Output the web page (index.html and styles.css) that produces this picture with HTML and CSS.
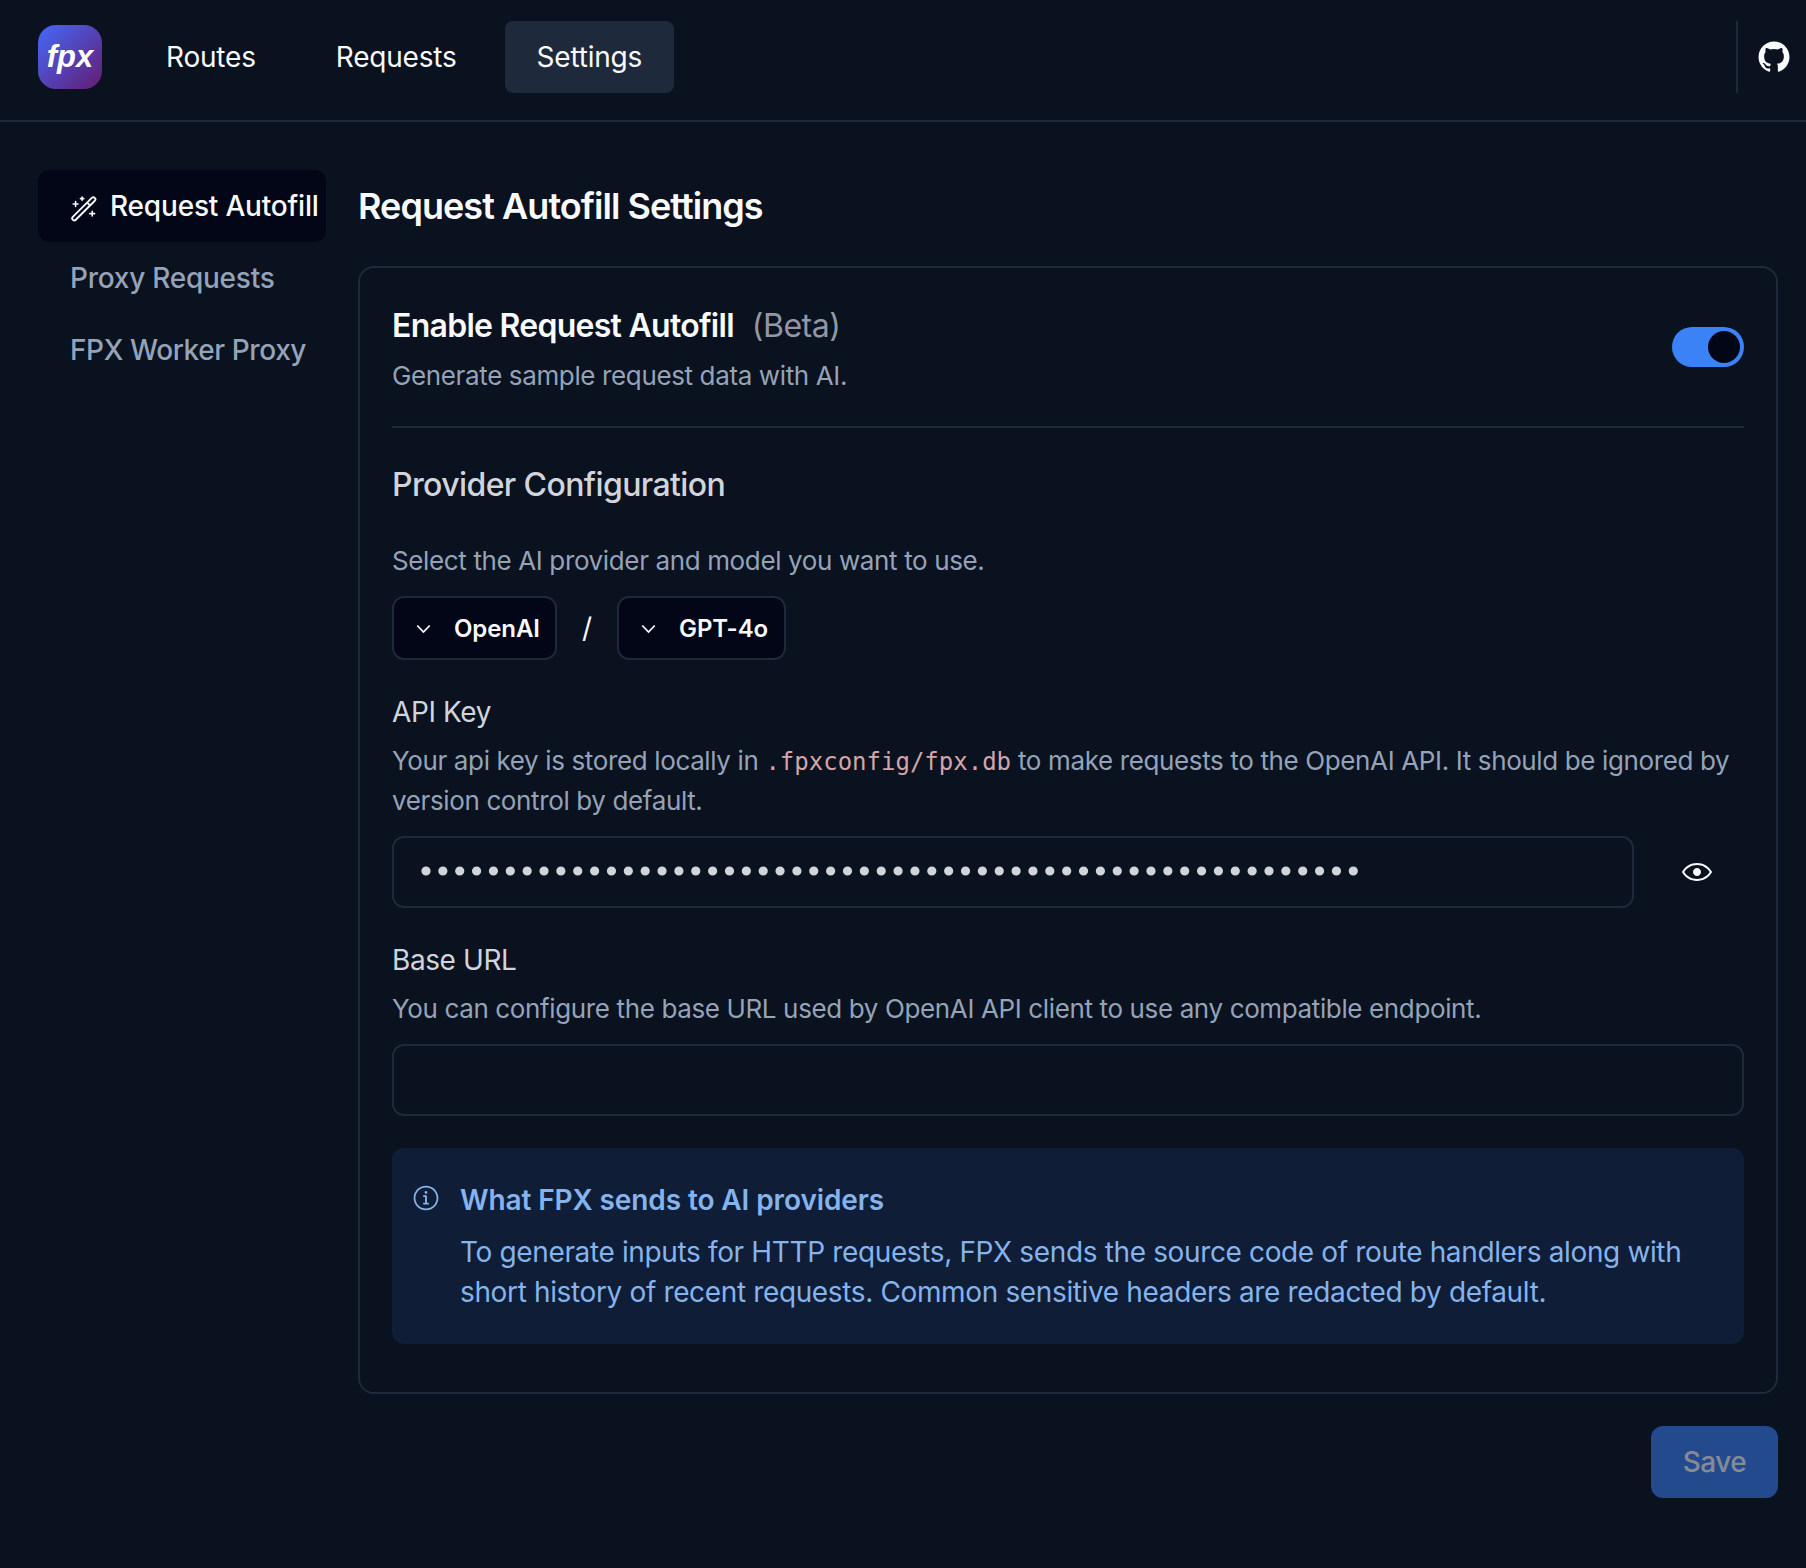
FILE: index.html
```html
<!DOCTYPE html>
<html lang="en">
<head>
<meta charset="utf-8">
<title>FPX Settings</title>
<link rel="stylesheet" href="styles.css">
</head>
<body>
<header class="header">
  <div class="logo"><span class="logo-text">fpx</span></div>
  <nav class="nav">
    <a class="nav-link">Routes</a>
    <a class="nav-link">Requests</a>
    <a class="nav-link nav-link-active">Settings</a>
  </nav>
  <div class="header-end">
    <svg class="github" viewBox="0 0 15 15" fill="currentColor"><path fill-rule="evenodd" clip-rule="evenodd" d="M7.49933 0.25C3.49635 0.25 0.25 3.49593 0.25 7.50024C0.25 10.703 2.32715 13.4206 5.2081 14.3797C5.57084 14.446 5.70302 14.2222 5.70302 14.0299C5.70302 13.8576 5.69679 13.4019 5.69323 12.797C3.67661 13.235 3.25112 11.825 3.25112 11.825C2.92132 10.9874 2.44599 10.7644 2.44599 10.7644C1.78773 10.3149 2.49584 10.3238 2.49584 10.3238C3.22353 10.375 3.60629 11.0711 3.60629 11.0711C4.25298 12.1788 5.30335 11.8588 5.71638 11.6732C5.78225 11.205 5.96962 10.8854 6.17658 10.7043C4.56675 10.5209 2.87415 9.89918 2.87415 7.12104C2.87415 6.32925 3.15677 5.68257 3.62053 5.17563C3.54576 4.99226 3.29697 4.25521 3.69174 3.25691C3.69174 3.25691 4.30015 3.06196 5.68522 3.99973C6.26337 3.83906 6.8838 3.75895 7.50022 3.75583C8.1162 3.75895 8.73619 3.83906 9.31523 3.99973C10.6994 3.06196 11.3069 3.25691 11.3069 3.25691C11.7026 4.25521 11.4538 4.99226 11.3795 5.17563C11.8441 5.68257 12.1245 6.32925 12.1245 7.12104C12.1245 9.9063 10.4292 10.5192 8.81452 10.6985C9.07444 10.9224 9.30633 11.3648 9.30633 12.0413C9.30633 13.0102 9.29742 13.7922 9.29742 14.0299C9.29742 14.2239 9.42828 14.4496 9.79591 14.3788C12.6746 13.4179 14.75 10.7025 14.75 7.50024C14.75 3.49593 11.5036 0.25 7.49933 0.25Z"/></svg>
  </div>
</header>
<div class="page">
  <aside class="sidebar">
    <a class="side-link side-link-active">
      <svg class="wand" viewBox="0 0 15 15" fill="none" stroke="currentColor" stroke-linecap="round" stroke-linejoin="round"><path d="M1.5 12.3 11.7 2.1a1.05 1.05 0 0 1 1.6 1.5L3.1 13.8a1.05 1.05 0 0 1-1.6-1.5ZM9.2 4.6l1.6 1.6"/><path stroke-width=".85" d="M3 4.1v2.6M1.7 5.4h2.6M6.5 1.6v1.8M5.6 2.5h1.8M11.9 9.2v2.6M10.6 10.5h2.6"/></svg>
      <span>Request Autofill</span>
    </a>
    <a class="side-link">Proxy Requests</a>
    <a class="side-link side-link-long">FPX Worker Proxy</a>
  </aside>
  <main class="main">
    <h1 class="title">Request Autofill Settings</h1>
    <section class="card">
      <div class="enable">
        <div class="enable-copy">
          <h2 class="heading heading-bright">Enable Request Autofill<span class="beta">(Beta)</span></h2>
          <p class="hint">Generate sample request data with AI.</p>
        </div>
        <div class="switch"><span class="knob"></span></div>
      </div>
      <h2 class="heading provider">Provider Configuration</h2>
      <p class="hint">Select the AI provider and model you want to use.</p>
      <div class="selects">
        <button class="select select-provider"><svg class="chevron" viewBox="0 0 12 8"><path d="M1 1.2 6 6.4l5-5.2"/></svg>OpenAI</button>
        <span class="slash">/</span>
        <button class="select select-model"><svg class="chevron" viewBox="0 0 12 8"><path d="M1 1.2 6 6.4l5-5.2"/></svg>GPT-4o</button>
      </div>
      <div class="label">API Key</div>
      <p class="hint field-hint">Your api key is stored locally in <code class="code">.fpxconfig/fpx.db</code> to make requests to the OpenAI API. It should be ignored by<br>version control by default.</p>
      <div class="key-row">
        <div class="input key-input"><svg class="dots" viewBox="0 0 940 10"><path d="M5 5H933"/></svg></div>
        <button class="reveal"><svg class="eye" viewBox="0 0 15 15" fill="currentColor"><path fill-rule="evenodd" clip-rule="evenodd" d="M7.5 11C4.80285 11 2.52952 9.62184 1.09622 7.50001C2.52952 5.37816 4.80285 4 7.5 4C10.1971 4 12.4705 5.37816 13.9038 7.50001C12.4705 9.62183 10.1971 11 7.5 11ZM7.5 3C4.30786 3 1.65639 4.70638 0.0760002 7.23501C-0.0253338 7.39715 -0.0253334 7.60288 0.0760014 7.76501C1.65639 10.2936 4.30786 12 7.5 12C10.6921 12 13.3436 10.2936 14.924 7.76501C15.0253 7.60288 15.0253 7.39715 14.924 7.23501C13.3436 4.70638 10.6921 3 7.5 3ZM7.5 9.5C8.60457 9.5 9.5 8.60457 9.5 7.5C9.5 6.39543 8.60457 5.5 7.5 5.5C6.39543 5.5 5.5 6.39543 5.5 7.5C5.5 8.60457 6.39543 9.5 7.5 9.5Z"/></svg></button>
      </div>
      <div class="label">Base URL</div>
      <p class="hint field-hint">You can configure the base URL used by OpenAI API client to use any compatible endpoint.</p>
      <div class="input"></div>
      <div class="notice">
        <svg class="info" viewBox="0 0 15 15" fill="currentColor"><path fill-rule="evenodd" clip-rule="evenodd" d="M7.49991 0.876892C3.84222 0.876892 0.877075 3.84204 0.877075 7.49972C0.877075 11.1574 3.84222 14.1226 7.49991 14.1226C11.1576 14.1226 14.1227 11.1574 14.1227 7.49972C14.1227 3.84204 11.1576 0.876892 7.49991 0.876892ZM1.82707 7.49972C1.82707 4.36671 4.36689 1.82689 7.49991 1.82689C10.6329 1.82689 13.1727 4.36671 13.1727 7.49972C13.1727 10.6327 10.6329 13.1726 7.49991 13.1726C4.36689 13.1726 1.82707 10.6327 1.82707 7.49972ZM8.24992 4.49999C8.24992 4.9142 7.91413 5.24999 7.49992 5.24999C7.08571 5.24999 6.74992 4.9142 6.74992 4.49999C6.74992 4.08577 7.08571 3.74999 7.49992 3.74999C7.91413 3.74999 8.24992 4.08577 8.24992 4.49999ZM6.00003 5.99999H6.50003H7.50003C7.77618 5.99999 8.00003 6.22384 8.00003 6.49999V9.99999H8.50003H9.00003V11H8.50003H7.50003H6.50003H6.00003V9.99999H6.50003H7.00003V6.99999H6.50003H6.00003V5.99999Z"/></svg>
        <div>
          <h3 class="notice-title">What FPX sends to AI providers</h3>
          <p class="notice-text">To generate inputs for HTTP requests, FPX sends the source code of route handlers along with<br>short history of recent requests. Common sensitive headers are redacted by default.</p>
        </div>
      </div>
    </section>
    <button class="save">Save</button>
  </main>
</div>
</body>
</html>
```
FILE: styles.css
```css
* { box-sizing: border-box; margin: 0; }
body { background: #0a111f; color: #f8fafc; font: 400 28px/40px Inter, "Liberation Sans", sans-serif; }
svg { display: block; flex: none; }
button { font: inherit; color: inherit; letter-spacing: inherit; border: 0; background: none; padding: 0; }

.header { display: flex; height: 122px; padding: 21px 0 27px 38px; border-bottom: 2px solid #1e293b; }
.logo { display: flex; align-items: center; justify-content: center; width: 64px; height: 64px; margin-top: 4px; border-radius: 18px; background: linear-gradient(135deg, #4469fa, #641c72); }
.logo-text { font: italic 700 31px/40px "Liberation Sans", sans-serif; color: #fff; }
.nav { display: flex; gap: 16px; margin-left: 32px; height: 72px; letter-spacing: -0.2px; }
.nav-link { padding: 16px 32px; border-radius: 8px; }
.nav-link-active { background: #1e293b; }
.header-end { display: flex; align-items: center; width: 70px; height: 72px; margin-left: auto; padding-left: 20px; border-left: 2px solid #1e293b; }
.github { width: 32px; height: 32px; }

.page { display: flex; gap: 32px; padding: 48px 28px 0 38px; }
.sidebar { width: 288px; flex: none; font-weight: 500; }
.side-link { display: flex; align-items: center; gap: 12px; height: 72px; padding-left: 32px; border-radius: 12px; color: #94a3b8; white-space: nowrap; letter-spacing: -0.25px; }
.side-link-active { background: #020617; color: #f8fafc; letter-spacing: -0.18px; }
.side-link-long { letter-spacing: -0.4px; }
.wand { width: 28px; height: 28px; margin-top: 4px; }
.main { flex: 1; min-width: 0; display: flex; flex-direction: column; }
.title { height: 96px; font-size: 36px; font-weight: 600; line-height: 72px; letter-spacing: -0.95px; }
.card { border: 2px solid #1e293b; border-radius: 16px; padding: 32px 32px 48px; }
.enable { display: flex; align-items: center; justify-content: space-between; height: 128px; padding-bottom: 32px; border-bottom: 2px solid #1e293b; }
.enable-copy { padding-top: 3px; }
.heading { font-size: 32px; font-weight: 550; line-height: 48px; letter-spacing: -0.6px; color: #d1d5db; }
.heading-bright { color: #f8fafc; font-weight: 600; letter-spacing: -0.73px; margin-bottom: 6px; }
.beta { font-weight: 400; letter-spacing: -0.5px; color: #9297a3; margin-left: 18px; }
.hint { font-size: 26px; line-height: 40px; letter-spacing: -0.37px; color: #94a3b8; white-space: nowrap; }
.switch { width: 72px; height: 40px; padding: 4px; border-radius: 20px; background: #3b82f6; display: flex; justify-content: flex-end; }
.knob { width: 32px; height: 32px; border-radius: 50%; background: #020617; }
.provider { margin: 33px 0 32px; }
.selects { display: flex; align-items: center; margin: 15px 0 32px; }
.select { display: flex; align-items: center; gap: 23px; height: 64px; padding: 2px 0 0 22px; border: 2px solid #1e293b; border-radius: 12px; background: #020617; font-size: 24px; font-weight: 600; letter-spacing: -0.1px; }
.select-provider { width: 165px; }
.select-model { width: 169px; }
.chevron { width: 15px; height: 10px; fill: none; stroke: currentColor; stroke-width: 1.4; }
.slash { width: 60px; text-align: center; }
.label { color: #d1d5db; letter-spacing: -0.4px; }
.field-hint { margin: 9px 0 15px; }
.code { font: 24px/1 "DejaVu Sans Mono", monospace; letter-spacing: 0; color: #d4a5a8; }
.key-row { display: flex; gap: 16px; margin-bottom: 32px; }
.input { height: 72px; border: 2px solid #1e293b; border-radius: 12px; }
.key-input { width: 1242px; padding: 28px 27px; }
.dots { width: 940px; height: 10px; fill: none; stroke: #d1d5db; stroke-width: 9.2; stroke-linecap: round; stroke-dasharray: 0 16.86; }
.reveal { display: flex; flex: 1; align-items: center; justify-content: center; }
.eye { width: 30px; height: 30px; }
.notice { display: flex; gap: 20px; height: 196px; margin-top: 32px; padding: 32px 20px; border-radius: 12px; background: #0f1d37; color: #85b3ec; }
.info { width: 28px; height: 28px; margin-top: 4px; }
.notice-title { font-size: 28px; font-weight: 600; line-height: 40px; letter-spacing: -0.1px; margin-bottom: 12px; }
.notice-text { white-space: nowrap; letter-spacing: -0.36px; }
.save { align-self: flex-end; width: 127px; height: 72px; margin-top: 32px; border-radius: 12px; background: #234a8d; color: #858b95; font-weight: 550; letter-spacing: -0.5px; }
```
